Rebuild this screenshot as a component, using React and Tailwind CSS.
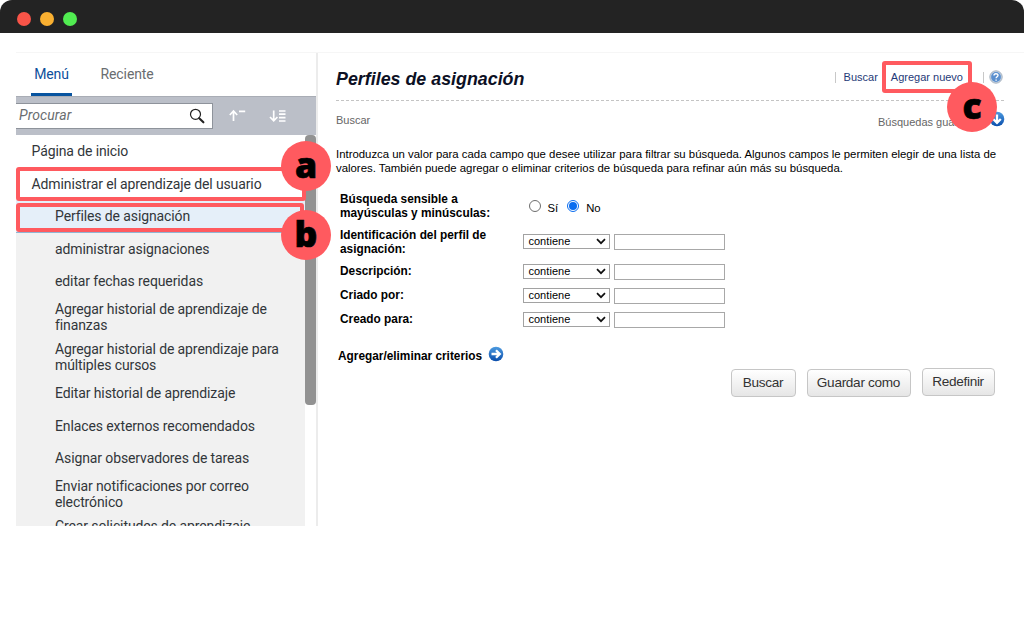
import React from "react";

const rows = [
  { lines: ["administrar asignaciones"] },
  { lines: ["editar fechas requeridas"] },
  { lines: ["Agregar historial de aprendizaje de", "finanzas"] },
  { lines: ["Agregar historial de aprendizaje para", "múltiples cursos"] },
  { lines: ["Editar historial de aprendizaje"] },
  { lines: ["Enlaces externos recomendados"] },
  { lines: ["Asignar observadores de tareas"] },
  { lines: ["Enviar notificaciones por correo", "electrónico"] },
  { lines: ["Crear solicitudes de aprendizaje"] },
];

function Badge({ children, className }) {
  return (
    <div
      className={
        "absolute z-20 flex size-[50px] items-center justify-center rounded-full bg-[#ff5a5f] font-['Open_Sans',sans-serif] text-[35.5px] leading-none font-extrabold text-black " +
        className
      }
    >
      <span className="pb-[3px] [-webkit-text-stroke:0.7px_#000]">{children}</span>
    </div>
  );
}

function TitleBar() {
  return (
    <header className="flex h-[33px] shrink-0 items-center gap-[9.5px] rounded-t-[12px] bg-[#232323] pt-[5px] pl-[17px]">
      <span className="size-[13.5px] rounded-full bg-[#f85448]" />
      <span className="size-[13.5px] rounded-full bg-[#fab031]" />
      <span className="size-[13.5px] rounded-full bg-[#51ec51]" />
    </header>
  );
}

function Sidebar() {
  return (
    <aside className="flex h-full w-[302px] shrink-0 flex-col border-r-2 border-[#ececec] font-[Roboto,sans-serif] text-[#32363a]">
      <nav className="flex h-[43px] shrink-0 pl-[15px] text-[14px] tracking-[-0.1px]">
        <div className="flex w-[41px] justify-center border-b-[3px] border-[#0854a0] pt-[11px] leading-[20px] text-[#0d4f9b]">
          Menú
        </div>
        <div className="pt-[11px] pl-[28.5px] leading-[20px] text-[#6a6d70]">Reciente</div>
      </nav>
      <div className="flex h-[39px] shrink-0 items-center border-t border-[#a9adb5] bg-[#bbbfc8] pb-px">
        <div className="flex h-[26px] w-[197px] items-center justify-between border border-l-0 border-[#8e939b] bg-white pr-[7px] pl-[3px]">
          <span className="text-[14px] tracking-[0.1px] italic text-[#6a6d70]">Procurar</span>
          <svg width="16" height="16" viewBox="0 0 16 16" fill="none" stroke="#222">
            <circle cx="6.5" cy="6.3" r="5" strokeWidth="1.2" />
            <path d="M10.2 10.2L14.4 14.3" strokeWidth="2.1" strokeLinecap="round" />
          </svg>
        </div>
        <svg className="ml-[16px]" width="18" height="14" viewBox="0 0 18 14" fill="none" stroke="#fff" strokeWidth="1.7">
          <path d="M4.5 12V2.5M0.8 6L4.5 2L8.2 6M10 2.3H16.2" />
        </svg>
        <svg className="ml-[22px]" width="18" height="14" viewBox="0 0 18 14" fill="none" stroke="#fff" strokeWidth="1.7">
          <path d="M4.7 1.5V11.5M1 8L4.7 11.8L8.4 8M10 2H16.5M10 5.2H16.5M10 8.6H16.5M10 12H16.5" />
        </svg>
      </div>
      <div className="flex min-h-0 flex-1 overflow-hidden text-[14px] leading-4 tracking-[-0.11px]">
        <div className="w-[289px] shrink-0">
          <div className="flex h-[32px] items-center pl-[15.5px]">Página de inicio</div>
          <div className="flex h-[33px] items-center">
            <span className="mr-[11.5px] ml-[2px] h-[2px] w-[2px] bg-[#555]" />
            Administrar el aprendizaje del usuario
          </div>
          <div className="flex h-[33px] items-center border-b border-[#91b5d3] bg-[#e5eff9] pl-[39px]">Perfiles de asignación</div>
          <div className="bg-[#f1f1f1] pb-4">
            {rows.map((row) => (
              <div
                key={row.lines[0]}
                className={
                  row.lines.length > 1
                    ? "flex h-[40px] flex-col justify-center pl-[39px] whitespace-nowrap"
                    : "flex h-[32.2px] flex-col justify-center pl-[39px] whitespace-nowrap last:h-[24px]"
                }
              >
                {row.lines.map((line) => (
                  <span key={line}>{line}</span>
                ))}
              </div>
            ))}
          </div>
        </div>
        <div className="h-[270px] w-[11px] rounded-[4px] bg-[#929292]" />
      </div>
    </aside>
  );
}

function Orb({ down }) {
  return (
    <svg className="shrink-0" width="16" height="16" viewBox="0 0 16 16">
      <defs>
        <linearGradient id={down ? "orbDown" : "orbRight"} x1="0" y1="0" x2="0" y2="1">
          <stop offset="0" stopColor="#4d9be0" />
          <stop offset="1" stopColor="#0a4dab" />
        </linearGradient>
      </defs>
      <circle cx="8" cy="8" r="7.3" fill={down ? "url(#orbDown)" : "url(#orbRight)"} />
      <path
        d="M3.5 8H11M8 4.2L11.8 8L8 11.8"
        transform={down ? "rotate(90 8 8)" : undefined}
        fill="none"
        stroke="#fff"
        strokeWidth="2.3"
      />
    </svg>
  );
}

function Help() {
  return (
    <svg width="14" height="14" viewBox="0 0 14 14">
      <circle cx="7" cy="7" r="6.2" fill="#c3d3e6" stroke="#a9b3be" strokeWidth="1" />
      <circle cx="7" cy="7" r="4.9" fill="#5a8fce" />
      <path d="M5 5.5C5 3.2 9 3.2 9 5.3C9 6.7 7.1 6.7 7.1 8.3M7.1 9.4V10.8" fill="none" stroke="#fff" strokeWidth="1.4" />
    </svg>
  );
}

function Criterion({ label, className }) {
  return (
    <div className={"flex " + className}>
      <div className="w-[183.4px] shrink-0 font-bold">{label}</div>
      <div className="flex items-start gap-[3.6px] self-center">
        <div className="flex h-[15px] w-[87px] items-center justify-between border border-[#a2a2a2] pr-[3px] pl-[4px] text-[11px] leading-[13px]">
          <span className="tracking-[0.05px]">contiene</span>
          <svg width="10" height="7" viewBox="0 0 10 7" fill="none" stroke="#111" strokeWidth="1.7">
            <path d="M1 1.2L5 5.2L9 1.2" />
          </svg>
        </div>
        <div className="h-[16px] w-[111px] border border-[#a8a8a8]" />
      </div>
    </div>
  );
}

function Button({ children, className }) {
  return (
    <button
      className={
        "flex h-[28px] items-center justify-center rounded-[4px] border border-[#c6c6c6] bg-linear-to-b from-white to-[#e6e6e6] text-[13.6px] tracking-[-0.3px] whitespace-nowrap text-[#333] " +
        className
      }
    >
      {children}
    </button>
  );
}

function Content() {
  return (
    <main className="flex min-w-0 flex-1 flex-col pr-[27px] pl-[18px] font-['Liberation_Sans',Arial,sans-serif] text-black">
      <div className="-mr-[7px] flex h-[48px] shrink-0 items-start justify-between border-b border-dashed border-[#c4c4c4]">
        <h1 className="pt-[14px] text-[17.85px] leading-6 font-bold whitespace-nowrap italic text-[#0c1024]">Perfiles de asignación</h1>
        <div className="flex items-center pt-[16px] pr-px text-[11px] leading-4 text-[#1f3a78]">
          <span className="h-[11px] w-px bg-[#c8c8c8]" />
          <span className="ml-[8px]">Buscar</span>
          <span className="ml-[13px]">Agregar nuevo</span>
          <span className="mr-[5px] ml-[20px] h-[11px] w-px bg-[#c8c8c8]" />
          <Help />
        </div>
      </div>
      <div className="-mr-[8px] flex shrink-0 justify-between pt-[10px] text-[11px] leading-4 text-[#666]">
        <span className="pt-[1px]">Buscar</span>
        <div className="flex items-start">
          <span className="w-[111px] pt-[3px] whitespace-nowrap">Búsquedas guardadas</span>
          <Orb down />
        </div>
      </div>
      <p className="mt-[17px] text-[11.38px] leading-[14px] whitespace-nowrap">
        Introduzca un valor para cada campo que desee utilizar para filtrar su búsqueda. Algunos campos le permiten elegir de una lista de
        <br />
        valores. También puede agregar o eliminar criterios de búsqueda para refinar aún más su búsqueda.
      </p>
      <form className="flex flex-col pl-[4px] text-[11.85px] leading-[14px]">
        <div className="mt-[17px] flex h-[28px]">
          <div className="w-[188.5px] shrink-0 font-bold">
            Búsqueda sensible a<br />mayúsculas y minúsculas:
          </div>
          <div className="flex items-start pt-[8px] text-[11.3px]">
            <span className="size-[12px] rounded-full border border-[#6d6d6d]" />
            <span className="mt-[1px] ml-[7px]">Sí</span>
            <span className="ml-[9px] flex size-[12px] items-center justify-center rounded-full border border-[#0a6df0]">
              <span className="size-[8px] rounded-full bg-[#0a6df0]" />
            </span>
            <span className="mt-[1px] ml-[7px]">No</span>
          </div>
        </div>
        <Criterion className="mt-[8px] h-[28px]" label={<>Identificación del perfil de<br />asignación:</>} />
        <Criterion className="mt-[8px] h-[16px]" label="Descripción:" />
        <Criterion className="mt-[8px] h-[16px]" label="Criado por:" />
        <Criterion className="mt-[8px] h-[16px]" label="Creado para:" />
      </form>
      <div className="mt-[18px] flex items-start gap-[6px] pl-[2px] text-[11.85px] leading-[16px] font-bold">
        <span className="pt-[2px]">Agregar/eliminar criterios</span>
        <Orb />
      </div>
      <div className="mt-[4px] mr-[2.5px] flex items-start justify-end gap-[11px]">
        <Button className="mt-px w-[65px]">Buscar</Button>
        <Button className="mt-px w-[104px]">Guardar como</Button>
        <Button className="w-[73px]">Redefinir</Button>
      </div>
    </main>
  );
}

export default function App() {
  return (
    <div className="relative flex h-[640px] w-[1024px] flex-col overflow-hidden bg-white">
      <TitleBar />
      <div className="mt-[19px] ml-[16px] flex h-[474px] border-t border-[#f6f6f6]">
        <Sidebar />
        <Content />
      </div>
      <div className="absolute top-[167px] left-[16px] z-10 h-[34px] w-[290px] rounded-[3px] border-4 border-[#ff5a5f]" />
      <div className="absolute top-[203px] left-[16px] z-10 h-[29px] w-[288px] rounded-[3px] border-4 border-[#ff5a5f]" />
      <div className="absolute top-[61px] left-[882px] z-10 h-[32px] w-[90px] rounded-[3px] border-4 border-[#ff5a5f]" />
      <Badge className="top-[141px] left-[281px]">a</Badge>
      <Badge className="top-[210px] left-[281px]">b</Badge>
      <Badge className="top-[82px] left-[947px]">c</Badge>
    </div>
  );
}
